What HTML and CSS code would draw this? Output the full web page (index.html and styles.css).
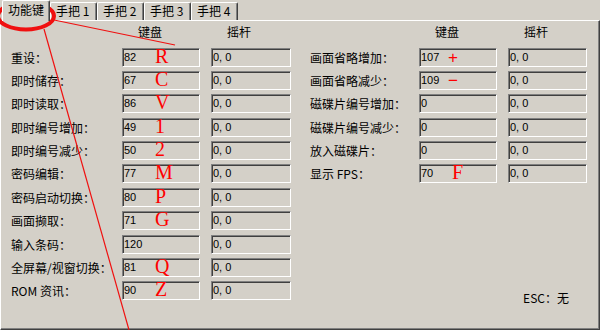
FILE: index.html
```html
<!doctype html>
<html lang="zh-cn">
<head>
  <meta charset="UTF-8">
  <title>功能键</title>
  <link rel="stylesheet" href="styles.css">
</head>
<body>
<div class="window">
  <div class="tabs">
    <div class="tab active">功能键</div>
    <div class="tab">手把 1</div>
    <div class="tab">手把 2</div>
    <div class="tab">手把 3</div>
    <div class="tab">手把 4</div>
  </div>
  <div class="panel">
    <div class="col col-left">
      <div class="head">
        <span></span><span>键盘</span><span>摇杆</span>
      </div>
      <div class="rows">
        <span class="label">重设：</span>
        <div class="field">82<i class="mark">R</i></div>
        <div class="field">0, 0</div>

        <span class="label">即时储存：</span>
        <div class="field">67<i class="mark">C</i></div>
        <div class="field">0, 0</div>

        <span class="label">即时读取：</span>
        <div class="field">86<i class="mark">V</i></div>
        <div class="field">0, 0</div>

        <span class="label">即时编号增加：</span>
        <div class="field">49<i class="mark">1</i></div>
        <div class="field">0, 0</div>

        <span class="label">即时编号减少：</span>
        <div class="field">50<i class="mark">2</i></div>
        <div class="field">0, 0</div>

        <span class="label">密码编辑：</span>
        <div class="field">77<i class="mark">M</i></div>
        <div class="field">0, 0</div>

        <span class="label">密码启动切换：</span>
        <div class="field">80<i class="mark">P</i></div>
        <div class="field">0, 0</div>

        <span class="label">画面撷取：</span>
        <div class="field">71<i class="mark">G</i></div>
        <div class="field">0, 0</div>

        <span class="label">输入条码：</span>
        <div class="field">120</div>
        <div class="field">0, 0</div>

        <span class="label">全屏幕/视窗切换：</span>
        <div class="field">81<i class="mark">Q</i></div>
        <div class="field">0, 0</div>

        <span class="label">ROM 资讯：</span>
        <div class="field">90<i class="mark">Z</i></div>
        <div class="field">0, 0</div>
      </div>
    </div>

    <div class="col col-right">
      <div class="head">
        <span></span><span>键盘</span><span>摇杆</span>
      </div>
      <div class="rows">
        <span class="label">画面省略增加：</span>
        <div class="field">107<i class="sign">+</i></div>
        <div class="field">0, 0</div>

        <span class="label">画面省略减少：</span>
        <div class="field">109<i class="sign">−</i></div>
        <div class="field">0, 0</div>

        <span class="label">磁碟片编号增加：</span>
        <div class="field">0</div>
        <div class="field">0, 0</div>

        <span class="label">磁碟片编号减少：</span>
        <div class="field">0</div>
        <div class="field">0, 0</div>

        <span class="label">放入磁碟片：</span>
        <div class="field">0</div>
        <div class="field">0, 0</div>

        <span class="label">显示 FPS：</span>
        <div class="field">70<i class="mark">F</i></div>
        <div class="field">0, 0</div>
      </div>
      <div class="esc">ESC：无</div>
    </div>
  </div>

  <!-- red hand-drawn marks over the dialog -->
  <svg class="marks" width="600" height="330" viewBox="0 0 600 330">
    <ellipse cx="26" cy="16" rx="28" ry="13.5" fill="none" stroke="#f01010" stroke-width="4"/>
    <line x1="54" y1="20" x2="175" y2="45" stroke="#f01010" stroke-width="1.2"/>
    <line x1="44" y1="29" x2="129" y2="330" stroke="#f01010" stroke-width="1.2"/>
  </svg>
</div>
</body>
</html>
```

FILE: styles.css
```css
body {
  margin: 0;
  background: #d4d0c8;
  color: #000;
  font: 12px "Noto Sans CJK SC", sans-serif;
}

.window {
  position: relative;
  width: 600px;
  height: 330px;
}

.tabs {
  display: flex;
  align-items: flex-end;
  height: 20px;
  padding-left: 2px;
}

.tab {
  box-sizing: border-box;
  width: 47px;
  height: 18px;
  padding-left: 5px;
  border: 1px solid;
  border-color: #fff #404040 transparent #fff;
  border-bottom: none;
  border-radius: 2px 2px 0 0;
  box-shadow: inset -1px 0 #808080;
  line-height: 16px;
  white-space: nowrap;
}

.tab.active {
  position: relative;
  z-index: 1;
  width: 48px;
  height: 21px;
  margin-bottom: -1px;
  padding-left: 5px;
  background: #d4d0c8;
  line-height: 18px;
}

.panel {
  box-sizing: border-box;
  display: flex;
  gap: 19px;
  height: 310px;
  padding: 4px 0 0 10px;
  border: 1px solid;
  border-color: #fff #404040 #404040 #fff;
  box-shadow: inset -1px -1px #808080;
}

.col {
  display: flex;
  flex-direction: column;
}

.head,
.rows {
  display: grid;
  grid-template-columns: 100px 78px 80px;
  column-gap: 11px;
}

.col-right .head,
.col-right .rows {
  grid-template-columns: 98px 78px 79px;
}

.head {
  height: 14px;
  line-height: 14px;
  margin-bottom: 8.5px;
}

.head span {
  padding-left: 16px;
}

.rows {
  grid-auto-rows: 19px;
  row-gap: 4.4px;
  align-items: center;
}

.label {
  white-space: nowrap;
}

.field {
  position: relative;
  box-sizing: border-box;
  height: 19px;
  padding-left: 1px;
  border: 1px solid;
  border-color: #808080 #fff #fff #808080;
  box-shadow: inset 1px 1px #404040, inset -1px -1px #d4d0c8;
  font: 11px "Liberation Sans", sans-serif;
  line-height: 17px;
}

.mark {
  position: absolute;
  left: 32px;
  top: -3px;
  color: #f00;
  font: 20px "Liberation Serif", serif;
  line-height: 20px;
}

.sign {
  position: absolute;
  left: 28px;
  top: 0;
  color: #f00;
  font: 17px "Liberation Sans", sans-serif;
  line-height: 17px;
}

.esc {
  align-self: flex-end;
  margin: auto 18px 23px 0;
}

.marks {
  position: absolute;
  left: 0;
  top: 0;
  pointer-events: none;
}
```
